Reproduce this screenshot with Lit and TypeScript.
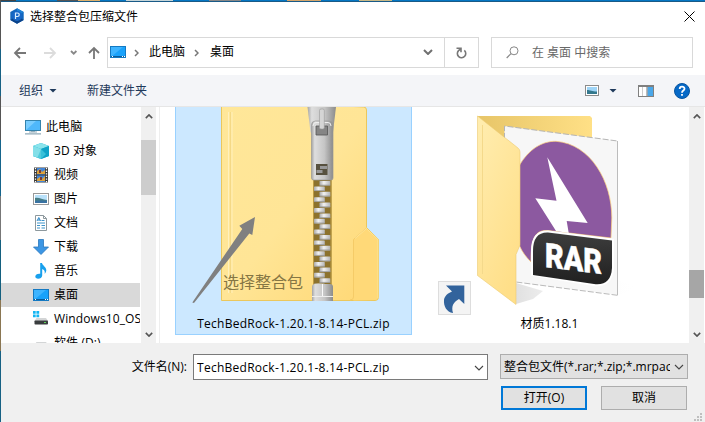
import { LitElement, html, css, svg } from "lit";
import { customElement } from "lit/decorators.js";
import { classMap } from "lit/directives/class-map.js";

const icons: Record<string, unknown> = {
  pc: svg`<rect x=".5" y="1.5" width="15" height="10" fill="#4fb8fb" stroke="#3483ad"/><path d="M1 11V2h10z" fill="#79cdff"/><path d="M6 12h4v1H6z" fill="#9bb4c2"/><path d="M4 12.6h8v.9H4zM0 14.3h16v1.2H0z" fill="#8fa9b8"/>`,
  cube: svg`<path d="M0 3 8 0l8 3v10l-8 3-8-3z" fill="#17b1d0"/><path d="M0 3 8 0l8 3-8 3z" fill="#8be4ec"/><path d="M0 3l8 3v10l-8-3z" fill="#52cbdc"/><path d="M8 6l8-3v10l-8 3z" fill="#0fa3c7"/><path d="M0 3l8 3-3.500 8.500L0 13z" fill="#83dfe8"/><path d="M8 6l5 5-5 5z" fill="#38c0d8"/>`,
  video: svg`<path d="M1 .5h14v15H1z" fill="#3b3b3b"/><path d="M4 1h8v6.500H4zM4 8.500h8V15H4z" fill="#4285d8"/><path d="M4 4l3-2 2 3 3-2v4H4zM4 12l3-2 2 2 3-3v5H4z" fill="#dca13b"/><path d="M6 3h2v3H6zM7 10h2v3H7z" fill="#793c35"/><path d="M2.500 1v15M13.500 1v15" stroke="#fff" stroke-width="1.300" stroke-dasharray="1.300 1.300"/>`,
  image: svg`<rect x=".5" y="2.500" width="15" height="11" fill="#fff" stroke="#999"/><path d="M2 4h12v8H2z" fill="#b9e1fa"/><path d="M2 7c4-1 7 2 12 2v3H2z" fill="#477e85"/><path d="M2 10c4-1 9 0 12-.5V12H2z" fill="#3972a2"/>`,
  doc: svg`<path d="M2.500.5h8l3 3v12h-11z" fill="#fff" stroke="#8d989d"/><path d="M10.500.5v3h3" fill="none" stroke="#8d989d"/><path d="M4 6l1.800-3.500L7.500 6M5 5h2" stroke="#2684c8" fill="none"/><path d="M8.500 5.500h3M4 8h8M4 10.500h3M8.500 10.500H12M4 13h3M8.500 13H12" stroke="#3f94c9"/>`,
  down: svg`<path d="M5.500.5h5V8h5L8 15.500.5 8h5z" fill="#3c96e4" stroke="#2977bd" stroke-width=".8"/>`,
  music: svg`<path d="M7.200 0h1.800c.4 2.500 4.600 4 4.300 7.500-.2 1.500-.9 2.600-1.700 3.200.7-2.400-.3-4-2.400-4.600v6.300c0 2-2 3.300-4.100 3.300-1.700 0-2.800-.9-2.800-2.200 0-1.700 2.200-3.200 4.900-2.700z" fill="#18a0ed"/>`,
  desk: svg`<rect x=".5" y="2.500" width="15" height="11" fill="#19a2fb" stroke="#1479c2"/><path d="M1 13V3h12z" fill="#3eb4ff"/><path d="M1 12.500h14" stroke="#0b5b99"/><path d="M2 12.500h1M12 12.500h1M14 12.500h1" stroke="#fff"/>`,
  drive: svg`<path d="M0 0h2.700v2.700H0zM3.400 0h2.800v2.700H3.400zM0 3.400h2.700v2.800H0zM3.400 3.400h2.800v2.800H3.400z" fill="#13b5f2"/><path d="M3.500 7h9.500l2 3H1.500z" fill="#d3d5d6"/><rect x="1.500" y="9.500" width="13.500" height="4" rx=".8" fill="#3a3d3f"/><path d="M11 11.500h2" stroke="#5ed35a"/>`,
  disk: svg`<path d="M3.500 7h9.500l2 3H1.500z" fill="#d3d5d6"/><rect x="1.500" y="9.500" width="13.500" height="4" rx=".8" fill="#3a3d3f"/>`,
};

const icon = (name: string) =>
  html`<svg class="i16" viewBox="0 0 16 16">${icons[name]}</svg>`;

const chevron = (cls: string) =>
  html`<svg class=${cls} viewBox="0 0 10 6"><path d="M1 1l4 4 4-4" fill="none" stroke="currentColor" stroke-width="var(--sw)"/></svg>`;

const places = [
  { icon: "pc", name: "此电脑", root: true },
  { icon: "cube", name: "3D 对象" },
  { icon: "video", name: "视频" },
  { icon: "image", name: "图片" },
  { icon: "doc", name: "文档" },
  { icon: "down", name: "下载" },
  { icon: "music", name: "音乐" },
  { icon: "desk", name: "桌面", selected: true },
  { icon: "drive", name: "Windows10_OS" },
  { icon: "disk", name: "软件 (D:)" },
];

const teeth = Array.from({ length: 20 }, (_, i) => ({
  x: i % 2 ? 314 : 319.5,
  y: 181 + i * 5.4,
}));

@customElement("zip-folder")
class ZipFolder extends LitElement {
  static styles = css`
    :host { display: block; }
    svg { display: block; width: 235px; height: 227px; }
    .note { font: 16px "Noto Sans CJK SC", sans-serif; fill: #857644; }
  `;
  render() {
    return html`<svg viewBox="176 107 235 227">
      <defs>
        <linearGradient id="f" x1="0" y1="0" x2="1" y2="1"><stop stop-color="#ffe799"/><stop offset=".5" stop-color="#ffe596"/><stop offset="1" stop-color="#ffd773"/></linearGradient>
        <linearGradient id="m"><stop stop-color="#a4a4a4"/><stop offset=".15" stop-color="#dedede"/><stop offset=".6" stop-color="#c5c5c5"/><stop offset="1" stop-color="#8b8b8b"/></linearGradient>
        <linearGradient id="t"><stop stop-color="#aaa"/><stop offset=".4" stop-color="#f2f2f2"/><stop offset="1" stop-color="#b5b5b5"/></linearGradient>
      </defs>
      <path d="M221.500 100V300.500H375q3.500 0 3.500-3.500V239.500L366.500 227.500V110q0-3-3-3z" fill="url(#f)" stroke="#ebc75c"/>
      <path d="M353.500 300.500V239.500L366.500 228l11.500 11.500V297q0 3-3 3z" fill="#ffd978"/>
      <path d="M350 300q3.500 0 3.500-3V239.500L366.500 228" fill="none" stroke="#f5cb67"/>
      <path d="M355 238.500l11.500-10 11.500 11V298" fill="none" stroke="#ffe8a0" stroke-width=".8"/>
      <path d="M228.500 112V293M232 112V293" stroke="#fff0bd"/><path d="M230.500 112V293" stroke="#f5d986"/>
      <path d="M313 178h18.500V285H313z" fill="#8c722d"/>
      <path d="M313.500 180v105M331 180v105" stroke="#bd9b43"/>
      ${teeth.map((t) => svg`<rect x=${t.x} y=${t.y} width="10.800" height="4.600" rx=".6" fill="url(#t)"/><path d=${`M${t.x} ${t.y + 4.2}h10.800`} stroke="#969696" stroke-width=".8"/>`)}
      <path d="M307.500 107h28.500l-3 25q-.3 2-2 2h-18q-2 0-2.500-2z" fill="url(#m)"/>
      <path d="M311.500 125q0-4 4-4h13.500q4 0 4 4v53q0 2-2 2h-17.500q-2 0-2-2z" fill="url(#m)" stroke="#999" stroke-width=".7"/>
      <path d="M313 126q0-3.500 3-3.500h12q3 0 3 3.500" fill="none" stroke="#efefef"/>
      <path d="M316 126h11.500v9H316z" fill="#858585" stroke="#555" stroke-width=".8"/>
      <rect x="319.500" y="109" width="4.800" height="20" rx="1.500" fill="#d5d5d5" stroke="#999" stroke-width=".6"/>
      <path d="M316 164h11.500v11H316z" fill="#57513f"/><path d="M320 166h7v3h-7zM316.500 170h6v3h-6z" fill="#999"/>
      <path d="M312 287q0-3 3-3h15q3 0 3 3v14h-21z" fill="url(#m)"/><path d="M322.500 284v12" stroke="#fafafa"/><path d="M312 296.500h21" stroke="#eee"/>
      <text class="note" x="223" y="288">选择整合包</text>
      <path d="M255 217L252.300 235l-3-1.500L194 303l-1.700-.5L242.300 229l-3-3.300z" fill="#808080"/>
    </svg>`;
  }
}

@customElement("rar-folder")
class RarFolder extends LitElement {
  static styles = css`
    :host { display: block; }
    svg { display: block; width: 235px; height: 227px; }
    .rar { font: 900 34px Roboto, sans-serif; fill: #fff; stroke: #fff; stroke-width: .5px; }
  `;
  render() {
    return html`<svg viewBox="432 107 235 227">
      <defs>
        <linearGradient id="b"><stop stop-color="#e7c568"/><stop offset="1" stop-color="#ffe086"/></linearGradient>
        <linearGradient id="f" x1="0" y1="0" x2=".6" y2="1"><stop stop-color="#ffedb0"/><stop offset="1" stop-color="#ffdf89"/></linearGradient>
        <linearGradient id="k" x1="0" y1="0" x2="0" y2="1"><stop stop-color="#3d3d3d"/><stop offset="1" stop-color="#202020"/></linearGradient>
        <linearGradient id="s"><stop stop-color="#ccc"/><stop offset="1" stop-color="#fff" stop-opacity="0"/></linearGradient>
      </defs>
      <path d="M618 295l21-7-21-8zM516 304l17-5 10-8-27-8z" fill="url(#s)" opacity=".6"/>
      <path d="M477.500 116H590l2 2v100H519z" fill="url(#b)"/>
      <path d="M504.500 126L617.500 141V295L516 282.500V150L504.500 140z" fill="#f7f7f7"/>
      <path d="M504.500 139V126L617.500 141" fill="none" stroke="#b5b5b5" stroke-dasharray="6 2"/>
      <path d="M617.500 141V295" stroke="#bcbcbc"/><path d="M617.500 295.300L516 282" stroke="#bababa" stroke-dasharray="6 2"/>
      <path d="M519 166C529 149 542 141 556 141.300 591 144 612 182 611.800 218L611 238 548 230.500C536 230 531 236 531 262 525 256 521 250 519 244z" fill="#8c59a0" stroke="#ffd17d" stroke-width=".7"/>
      <path d="M547.300 157.300L587.700 223l-21-2 2 12-12.700-2L535.300 198.300l21.200 2.400z" fill="#fff"/>
      <path d="M533 274V251q0-19 15-18.500L612 240.500V268q-1 18-18 16z" fill="#fff" stroke="#fff" stroke-width="4"/>
      <path d="M533 275V251q0-19 15-18.500L612 240.500V268q-1 18-18 16z" fill="url(#k)"/>
      <text class="rar" transform="translate(545 267) skewY(7)" textLength="57" lengthAdjust="spacingAndGlyphs">RAR</text>
      <path d="M477.500 116L518 148q2 1.500 2 4V245l-4 9.500V304.500L477.500 275.500z" fill="url(#f)" stroke="#eccb72" stroke-width=".6"/>
      <path d="M482.500 125V274" stroke="#f4d98b"/>
      <rect x="438.500" y="281.500" width="32" height="33" fill="#f4f4f4" stroke="#ddd"/>
      <path d="M446 285.500H464.300V304L459 299C453.500 302 451 306 453 313 446.500 312 443.500 306 444 300 444.500 296 448 293 452 291.500z" fill="#32639c"/>
    </svg>`;
  }
}

@customElement("app-root")
class AppRoot extends LitElement {
  static styles = css`
    :host { display: block; width: 705px; height: 422px; overflow: hidden; --sw: 1.500; }
    * { box-sizing: border-box; }
    svg { display: block; flex: none; }
    .win { display: flex; flex-direction: column; width: 705px; height: 422px; background: #fff;
      border-left: 1px solid; border-image: linear-gradient(#555 0 50px, #176184 50px 97px, #555 97px 140px, #16658c 140px 196px, #777 196px 240px, #14607f 240px 300px, #8a7652 300px 350px, #176184 350px) 1;
      font: 12px/16px "Open Sans", "Noto Sans CJK SC", sans-serif; color: #000; }
    .desktop { height: 2px; flex: none; background: linear-gradient(90deg, #444 0 15px, #0577c4 15px 56px, #555 56px 77px, #ddb16c 77px 99px, #0577c4 99px 125px, #c5d5d9 125px 172px, #0577c4 172px 208px, #888 208px 240px, #0577c4 240px 286px, #d4a66c 286px 320px, #0577c4 320px 358px, #c8b987 358px 391px, #0577c4 391px); border-bottom: 1px solid #195a87; }
    .title { display: flex; align-items: center; height: 30px; padding: 0 10px 2px 8px; flex: none; }
    .title .name { flex: 1; margin-left: 5px; padding-top: 1px; }
    .nav { display: flex; height: 43px; padding: 5px 12px 7px 0; flex: none; }
    .arrows { display: block; width: 106px; height: 31px; }
    .addr, .reload, .search { border: 1px solid #d9d9d9; display: flex; align-items: center; height: 31px; }
    .addr { width: 338px; padding: 0 11px 1px 2px; }
    .crumb { margin-left: 10px; }
    .gt { width: 5px; height: 8px; margin-left: 8px; margin-top: 1px; }
    .crumb + .gt { margin-left: 9px; }
    .gt + .crumb ~ .crumb { margin-left: 11px; }
    .grow { flex: 1; }
    .chev { width: 10px; height: 6px; color: #707070; --sw: 2; }
    .reload { width: 35px; margin-left: -1px; justify-content: center; }
    .search { width: 202px; margin-left: 12px; padding: 0 14px; color: #686868; }
    .search span { margin-left: 13px; padding-top: 1px; }
    .tools { display: flex; align-items: center; height: 32px; flex: none; background: #f4f5f8; border-bottom: 1px solid #e6e6e6; padding: 0 15px 0 18px; color: #1e395b; }
    .tri { width: 8px; height: 4px; background: #1e395b; clip-path: polygon(0 0, 100% 0, 50% 100%); }
    .org { margin-left: 6px; margin-right: 30px; }
    .view { margin-left: 10px; margin-right: 21px; }
    .help { margin-left: 20px; }
    .body { display: flex; height: 236px; flex: none; }
    .side { width: 139px; margin-right: 1px; height: 236px; padding-top: 8px; overflow: hidden; }
    .place { display: flex; align-items: center; height: 24px; padding-left: 32px; white-space: nowrap; letter-spacing: .1px; }
    .place span { margin-left: 5px; }
    .place.root { padding-left: 24px; }
    .place.selected { background: #d9d9d9; }
    .i16 { width: 16px; height: 16px; }
    .bar { display: flex; flex-direction: column; align-items: center; width: 15px; background: #f0f0f0; color: #555; padding-top: 7px; }
    .bar .chev { width: 8px; height: 5px; color: #555; }
    .up { transform: rotate(180deg); }
    .thumb { width: 15px; background: #cdcdcd; flex: none; }
    .bar.left .thumb { height: 55px; margin: 21px 0 137px; }
    .bar.right { margin-left: auto; margin-right: 1px; }
    .bar.right .thumb { height: 28px; background: #a6a6a6; margin: 151px 0 34px; }
    .files { display: flex; flex: 1; margin-left: 3px; border-left: 1px solid #eee; padding-left: 15px; }
    .tile { position: relative; width: 237px; height: 228px; border: 1px solid transparent; border-top: 0; }
    .tile + .tile { margin-left: 19px; }
    .tile.selected { background: #cce8ff; border-color: #99d1ff; }
    .label { position: absolute; left: 0; right: 0; bottom: 2px; text-align: center; white-space: nowrap; }
    .latin { letter-spacing: .27px; }
    .foot { flex: 1; background: #f0f0f0; padding: 11px 16px 0 0; }
    .row { display: flex; align-items: flex-start; }
    .cap { width: 192px; padding-right: 6px; text-align: right; line-height: 26px; }
    .combo { display: flex; align-items: center; justify-content: space-between; height: 26px; border: 1px solid #7a7a7a; background: #fff; width: 295px; padding: 1px 3px 0 3px; white-space: nowrap; overflow: hidden; }
    .combo .chev { --sw: 1.100; color: #444; }
    .combo span { overflow: hidden; }
    .filter { width: 188px; height: 25px; margin-left: 12px; background: #e1e1e1; border-color: #adadad; }
    .filter span { width: 166px; }
    .btns { display: flex; justify-content: flex-end; gap: 14px; margin-top: 6px; padding-right: 2px; }
    .btn { width: 86px; height: 24px; border: 1px solid #adadad; background: #e1e1e1; display: flex; align-items: center; justify-content: center; }
    .btn.primary { border: 2px solid #0078d7; }
    .grip { position: absolute; left: 694px; top: 413px; width: 9px; height: 9px; }
  `;
  render() {
    return html`<div class="win">
      <div class="desktop"></div>
      <div class="title">
        <svg width="16" height="16" viewBox="0 0 16 16"><path d="M8 .3l6.700 3.800v7.800L8 15.700 1.300 11.900V4.100z" fill="#1267bd"/><path d="M8 .3l6.700 3.800L8 8z" fill="#1d83d7"/><path d="M8 8l6.700 3.900L8 15.700l-6.700-3.800z" fill="#0c4389"/><circle cx="8" cy="8" r="5" fill="#1767c7"/><path d="M6.500 11V5h2a1.700 1.700 0 010 3.500h-2" fill="none" stroke="#d9efff" stroke-width="1.200"/></svg>
        <span class="name">选择整合包压缩文件</span>
        <svg width="11" height="11" viewBox="0 0 11 11"><path d="M.5.500l10 10M10.500.5l-10 10" stroke="#000"/></svg>
      </div>
      <div class="nav">
        <svg class="arrows" viewBox="1 37 106 31" fill="none" stroke-width="1.800">
          <path d="M26 53H15M20 48l-5 5 5 5" stroke="#777"/><path d="M44 53h11M50 48l5 5-5 5" stroke="#dcdcdc"/>
          <path d="M71 51l2.700 2.700L76.400 51" stroke="#888"/><path d="M94 59V48M89 53l5-5 5 5" stroke="#777"/>
        </svg>
        <div class="addr">
          ${icon("desk")}
          <svg class="gt" viewBox="0 0 5 8"><path d="M1 1l3 3-3 3" fill="none" stroke="#777" stroke-width="1.500"/></svg>
          <span class="crumb">此电脑</span>
          <svg class="gt" viewBox="0 0 5 8"><path d="M1 1l3 3-3 3" fill="none" stroke="#777" stroke-width="1.500"/></svg>
          <span class="crumb">桌面</span><span class="grow"></span>${chevron("chev")}
        </div>
        <div class="reload"><svg width="11" height="12" viewBox="0 0 11 12"><path d="M8.300 3.300A4.200 4.200 0 112.500 3.600L4.700 2M.5 1.200H5V5.300" fill="none" stroke="#777" stroke-width="1.600"/></svg></div>
        <div class="search"><svg width="13" height="13" viewBox="0 0 13 13"><circle cx="8" cy="4.800" r="4" fill="none" stroke="#888"/><path d="M5 7.700L.7 12" stroke="#888" stroke-width="1.200"/></svg><span>在 桌面 中搜索</span></div>
      </div>
      <div class="tools">
        <span>组织</span><i class="tri org"></i><span>新建文件夹</span><span class="grow"></span>
        <svg width="14" height="11" viewBox="0 0 14 11"><rect x=".5" y=".5" width="13" height="10" fill="#fff" stroke="#8b8b8b"/><path d="M2 2h10v7H2z" fill="#9ed4f7"/><path d="M2 5c3 0 5 1.500 10 1.500V9H2z" fill="#34788d"/></svg>
        <i class="tri view"></i>
        <svg width="16" height="12" viewBox="0 0 16 12"><rect x=".5" y=".5" width="15" height="11" fill="#fff" stroke="#808080"/><path d="M1 1.500h14" stroke="#808080"/><path d="M4.500 2v9" stroke="#ccc"/><path d="M9.500 2H15v9H9.500z" fill="#4aa7e9"/><path d="M9 1v10" stroke="#777"/></svg>
        <svg class="help" width="16" height="16" viewBox="0 0 16 16"><circle cx="8" cy="8" r="7.500" fill="#0669c7" stroke="#0855a0"/><path d="M5.700 6c0-3 4.800-3 4.800-.2C10.500 7.700 8 7.500 8 9.800M8 11v1.800" fill="none" stroke="#fff" stroke-width="1.800"/></svg>
      </div>
      <div class="body">
        <div class="side">
          ${places.map((p) => html`<div class=${classMap({ place: true, root: !!p.root, selected: !!p.selected })}>${icon(p.icon)}<span>${p.name}</span></div>`)}
        </div>
        <div class="bar left">${chevron("chev up")}<div class="thumb"></div>${chevron("chev")}</div>
        <div class="files">
          <div class="tile selected"><zip-folder></zip-folder><div class="label latin">TechBedRock-1.20.1-8.14-PCL.zip</div></div>
          <div class="tile"><rar-folder></rar-folder><div class="label">材质1.18.1</div></div>
          <div class="bar right">${chevron("chev up")}<div class="thumb"></div>${chevron("chev")}</div>
        </div>
      </div>
      <div class="foot">
        <div class="row">
          <div class="cap">文件名(N):</div>
          <div class="combo"><span class="latin">TechBedRock-1.20.1-8.14-PCL.zip</span>${chevron("chev")}</div>
          <div class="combo filter"><span>整合包文件(*.rar;*.zip;*.mrpac</span>${chevron("chev")}</div>
        </div>
        <div class="btns"><div class="btn primary">打开(O)</div><div class="btn">取消</div></div>
      </div>
      <svg class="grip" viewBox="0 0 9 9" fill="#bfbfbf"><path d="M6 0h2v2H6zM3 3h2v2H3zM6 3h2v2H6zM0 6h2v2H0zM3 6h2v2H3zM6 6h2v2H6z"/></svg>
    </div>`;
  }
}
